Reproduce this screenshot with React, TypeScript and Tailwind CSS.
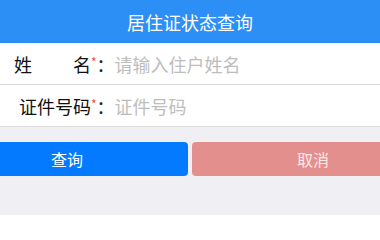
import React from "react";

export default function App() {
  const font = { fontFamily: '"Noto Sans CJK SC", "Noto Sans", sans-serif' };
  return (
    <div className="w-[380px] h-[215px] bg-[#efeff4] overflow-hidden" style={font}>
      <div className="h-[43px] bg-[#2b8ff6] flex items-center justify-center text-white text-[18px] leading-none">
        居住证状态查询
      </div>
      <div className="bg-white">
        <div className="h-[42px] flex items-center border-b border-[#dcdcdc] pl-[14px]">
          <div className="w-[77px] flex justify-between text-[18px] leading-none text-[#111]">
            <span>姓</span>
            <span>名</span>
          </div>
          <span className="text-[#f04848] text-[12px] leading-none self-start mt-[13px]">*</span>
          <span className="text-[18px] leading-none text-[#222]">：</span>
          <span className="text-[18px] leading-none text-[#bdbdbd]">请输入住户姓名</span>
        </div>
        <div className="h-[42px] flex items-center border-b border-[#dcdcdc] pl-[14px]">
          <div className="w-[77px] flex justify-end text-[18px] leading-none text-[#111]">
            <span>证件号码</span>
          </div>
          <span className="text-[#f04848] text-[12px] leading-none self-start mt-[13px]">*</span>
          <span className="text-[18px] leading-none text-[#222]">：</span>
          <span className="text-[18px] leading-none text-[#bdbdbd]">证件号码</span>
        </div>
      </div>
      <div className="flex gap-[4px] ml-[-54px] mt-[15px]">
        <div className="w-[242px] h-[34px] shrink-0 rounded-[4px] bg-[#037aff] flex items-center justify-center text-white text-[16px] leading-none">
          查询
        </div>
        <div className="w-[242px] h-[34px] shrink-0 rounded-[4px] bg-[#e38f8e] flex items-center justify-center text-white/80 text-[16px] leading-none">
          取消
        </div>
      </div>
    </div>
  );
}
